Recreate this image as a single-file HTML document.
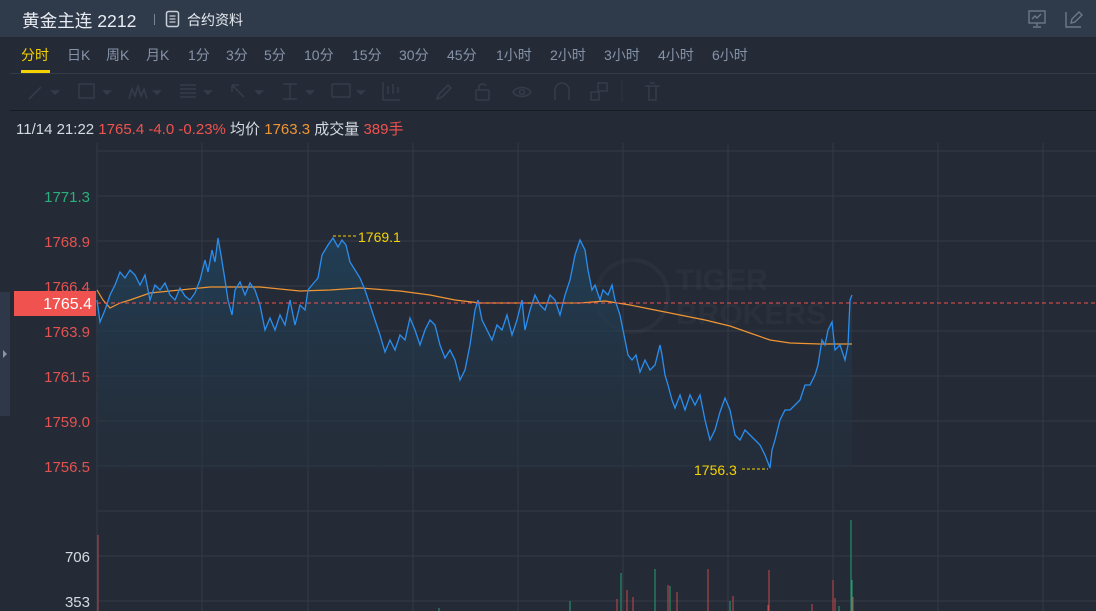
<!DOCTYPE html>
<html><head><meta charset="utf-8"><style>
*{margin:0;padding:0;box-sizing:border-box}
body{width:1096px;height:611px;overflow:hidden;background:#252b36;font-family:"Liberation Sans","Noto Sans CJK SC",sans-serif;position:relative}
.hdr{position:absolute;left:0;top:0;width:1096px;height:37px;background:#2f3a4a}
.t{position:absolute;white-space:nowrap}
.tabs span{position:absolute;top:45px;font-size:14px;color:#8593a8}
</style></head><body>
<div class="hdr"></div>
<div class="t" style="left:22px;top:8px;font-size:17.6px;color:#e8ecf2">黄金主连 2212</div>
<div style="position:absolute;left:154px;top:14px;width:1px;height:11px;background:#7a8494"></div>
<svg style="position:absolute;left:165px;top:10px" width="16" height="18" viewBox="0 0 16 18"><rect x="1.5" y="1.5" width="12" height="15" rx="2" fill="none" stroke="#c8ced8" stroke-width="1.5"/><path d="M4.5 6h6M4.5 9h6M4.5 12h6" stroke="#c8ced8" stroke-width="1.3"/></svg>
<div class="t" style="left:187px;top:10px;font-size:14px;color:#e8ecf2">合约资料</div>
<svg style="position:absolute;left:1027px;top:9px" width="20" height="20" viewBox="0 0 20 20" fill="none" stroke="#6d7888" stroke-width="1.4"><rect x="2" y="2" width="16" height="12"/><path d="M5 10l3-3 2 2 4-4M10 14v3M6 18h8"/></svg>
<svg style="position:absolute;left:1063px;top:9px" width="20" height="20" viewBox="0 0 20 20" fill="none" stroke="#6d7888" stroke-width="1.4"><path d="M3 3v15h15M8 14l1-4 7-7 3 3-7 7z"/></svg>
<div class="tabs">
<span style="left:21px;color:#f5d200">分时</span><span style="left:67px">日K</span><span style="left:106px">周K</span><span style="left:146px">月K</span><span style="left:188px">1分</span><span style="left:226px">3分</span><span style="left:264px">5分</span><span style="left:304px">10分</span><span style="left:352px">15分</span><span style="left:399px">30分</span><span style="left:447px">45分</span><span style="left:496px">1小时</span><span style="left:550px">2小时</span><span style="left:604px">3小时</span><span style="left:658px">4小时</span><span style="left:712px">6小时</span>
</div>
<div style="position:absolute;left:21px;top:70px;width:29px;height:3px;background:#f5d200"></div>
<div style="position:absolute;left:10px;top:73px;width:1086px;height:1px;background:#333c48"></div>
<svg style="position:absolute;left:0;top:74px" width="700" height="36" fill="none" stroke="#343c4a" stroke-width="1.6">
<path d="M29 25l12-12"/><path d="M52 17l3 3 3-3z" fill="#343c4a"/>
<rect x="79" y="10" width="15" height="14"/><path d="M104 17l3 3 3-3z" fill="#343c4a"/>
<path d="M129 25l3-10 3 7 3-10 3 10 3-7 3 10"/><path d="M154 17l3 3 3-3z" fill="#343c4a"/>
<path d="M180 11h16M180 15h16M180 19h16M180 23h16"/><path d="M205 17l3 3 3-3z" fill="#343c4a"/>
<path d="M232 11l12 12M232 11v7M232 11h7"/><path d="M256 17l3 3 3-3z" fill="#343c4a"/>
<path d="M283 10h14M290 10v15M283 25h14"/><path d="M307 17l3 3 3-3z" fill="#343c4a"/>
<rect x="332" y="10" width="18" height="13" rx="1"/><path d="M358 17l3 3 3-3z" fill="#343c4a"/>
<path d="M383 8v18h17M388 12v8M393 10v10M398 13v6"/>
<path d="M437 25l2-5 9-9 3 3-9 9z"/>
<rect x="476" y="16" width="13" height="10" rx="1"/><path d="M479 16v-4a4 4 0 0 1 7 0"/>
<path d="M513 18c4-6 14-6 18 0c-4 6-14 6-18 0z"/><circle cx="522" cy="18" r="2.5"/>
<path d="M555 26v-10a7 7 0 0 1 14 0v10"/>
<rect x="591" y="18" width="8" height="8"/><rect x="598" y="9" width="9" height="8"/>
<path d="M622 6v22" stroke="#2b323d"/>
<path d="M645 12h15M649 12v14h7v-14M650 9h5"/>
</svg>
<div style="position:absolute;left:10px;top:110px;width:1086px;height:1px;background:#181c22"></div>
<div class="t" style="left:16px;top:118px;font-size:15px;color:#d5dae2">11/14 21:22 <span style="color:#f0524f">1765.4 -4.0 -0.23%</span> 均价 <span style="color:#ef9533">1763.3</span> 成交量 <span style="color:#f0524f">389手</span></div>
<div style="position:absolute;left:0;top:292px;width:10px;height:124px;background:#2f3848"></div>
<div style="position:absolute;left:3px;top:350px;width:0;height:0;border-left:4px solid #8a94a4;border-top:4px solid transparent;border-bottom:4px solid transparent"></div>
<svg style="position:absolute;left:0;top:0" width="1096" height="611">
<defs><linearGradient id="g" x1="0" y1="0" x2="0" y2="1"><stop offset="0" stop-color="#1f4560" stop-opacity="0.75"/><stop offset="1" stop-color="#22303f" stop-opacity="0.3"/></linearGradient></defs>
<g stroke="#323b48" stroke-width="1">
<path d="M97 143V611M202 143V611M308 143V611M413 143V611M518 143V611M623 143V611M728 143V611M833 143V611M938 143V611M1043 143V611"/>
<path d="M97 151H1096M97 196H1096M97 241H1096M97 286H1096M97 331H1096M97 376H1096M97 421H1096M97 466H1096M97 511H1096M97 556H1096M97 601H1096"/>
</g>
<g opacity="0.035" fill="#c0c8d4" font-family="Liberation Sans" font-weight="bold" font-size="30"><circle cx="632" cy="296" r="36" fill="none" stroke="#c0c8d4" stroke-width="4"/><text x="676" y="290">TIGER</text><text x="676" y="324">BROKERS</text></g>
<polygon fill="url(#g)" points="97,470 97,300 100,322 105,310 110,295 115,285 120,272 125,278 130,270 135,275 140,285 145,275 150,300 155,285 160,290 165,283 170,295 175,300 180,288 185,296 190,300 195,293 200,280 205,260 208,272 212,250 215,262 218,238 221,255 225,280 228,300 232,315 235,290 240,282 245,295 250,283 255,290 260,305 265,330 270,318 275,330 280,315 285,325 290,300 295,325 300,305 305,310 308,290 312,285 318,278 322,255 328,245 333,238 338,247 342,240 346,245 350,262 355,270 360,278 365,290 370,305 375,320 380,335 385,352 390,340 395,350 400,335 405,340 410,318 415,330 420,345 425,330 430,320 435,325 440,345 445,358 450,350 455,360 460,380 465,370 470,345 475,310 478,300 482,320 487,330 492,340 497,325 502,330 507,315 512,335 517,320 522,300 525,330 530,310 535,295 540,305 545,310 550,295 555,300 560,315 565,295 570,280 575,255 580,240 585,250 588,270 592,290 595,285 600,300 603,290 608,295 612,285 615,300 620,315 625,340 628,355 632,360 636,355 640,372 645,360 650,370 655,365 660,345 662,355 665,375 668,385 672,400 675,408 680,395 685,410 690,395 695,405 700,395 705,420 710,440 715,430 720,412 725,398 730,410 735,435 740,440 745,430 750,435 755,440 760,445 765,455 770,468 772,450 775,440 780,420 785,410 790,410 795,405 800,400 805,385 810,385 815,375 818,365 822,340 825,345 828,330 832,322 835,350 840,345 845,360 848,345 850,300 852,295 852,470"/>
<polyline fill="none" stroke="#ef9533" stroke-width="1.2" points="97,290 103,300 110,308 120,303 130,300 150,293 180,290 210,287 260,287 300,291 330,290 360,288 400,291 430,295 455,300 480,303 530,303 580,303 605,301 630,305 655,310 680,315 705,320 730,326 750,333 770,340 790,343 820,344 852,344"/>
<polyline fill="none" stroke="#2a8ef0" stroke-width="1.3" points="97,300 100,322 105,310 110,295 115,285 120,272 125,278 130,270 135,275 140,285 145,275 150,300 155,285 160,290 165,283 170,295 175,300 180,288 185,296 190,300 195,293 200,280 205,260 208,272 212,250 215,262 218,238 221,255 225,280 228,300 232,315 235,290 240,282 245,295 250,283 255,290 260,305 265,330 270,318 275,330 280,315 285,325 290,300 295,325 300,305 305,310 308,290 312,285 318,278 322,255 328,245 333,238 338,247 342,240 346,245 350,262 355,270 360,278 365,290 370,305 375,320 380,335 385,352 390,340 395,350 400,335 405,340 410,318 415,330 420,345 425,330 430,320 435,325 440,345 445,358 450,350 455,360 460,380 465,370 470,345 475,310 478,300 482,320 487,330 492,340 497,325 502,330 507,315 512,335 517,320 522,300 525,330 530,310 535,295 540,305 545,310 550,295 555,300 560,315 565,295 570,280 575,255 580,240 585,250 588,270 592,290 595,285 600,300 603,290 608,295 612,285 615,300 620,315 625,340 628,355 632,360 636,355 640,372 645,360 650,370 655,365 660,345 662,355 665,375 668,385 672,400 675,408 680,395 685,410 690,395 695,405 700,395 705,420 710,440 715,430 720,412 725,398 730,410 735,435 740,440 745,430 750,435 755,440 760,445 765,455 770,468 772,450 775,440 780,420 785,410 790,410 795,405 800,400 805,385 810,385 815,375 818,365 822,340 825,345 828,330 832,322 835,350 840,345 845,360 848,345 850,300 852,295"/>
<path d="M97 303H1096" stroke="#f0524f" stroke-width="1" stroke-dasharray="4 3"/>
<path d="M333 236H356M742 469H768" stroke="#f5d200" stroke-width="1" stroke-dasharray="3 2"/>
<text x="358" y="242" font-size="14" fill="#f5d200" font-family="Liberation Sans">1769.1</text>
<text x="694" y="475" font-size="14" fill="#f5d200" font-family="Liberation Sans">1756.3</text>
<g font-family="Liberation Sans" font-size="15" text-anchor="end">
<text x="90" y="202" fill="#2ab07a">1771.3</text>
<text x="90" y="247" fill="#e35250">1768.9</text>
<text x="90" y="292" fill="#e35250">1766.4</text>
<text x="90" y="337" fill="#e35250">1763.9</text>
<text x="90" y="382" fill="#e35250">1761.5</text>
<text x="90" y="427" fill="#e35250">1759.0</text>
<text x="90" y="472" fill="#e35250">1756.5</text>
<text x="90" y="562" fill="#d5dae2">706</text>
<text x="90" y="607" fill="#d5dae2">353</text>
</g>
<rect x="14" y="291" width="82" height="25" fill="#f0524f"/>
<text x="92" y="309" font-family="Liberation Sans" font-size="16" fill="#fff" text-anchor="end">1765.4</text>
<g stroke-width="1">
<path d="M98 535V611" stroke="#b24a4a"/>
<path d="M439 608V611M570 601V611M621 573V611M655 569V611M670 586V611M730 601V611M851 520V611M852 580V611M839 606V611" stroke="#1fa070"/>
<path d="M617 599V611M627 590V611M633 597V611M668 585V611M677 592V611M708 569V611M733 596V611M769 570V611M812 604V611M833 580V611M835 598V611M853 597V611M768 605V611" stroke="#c24a4a"/>
</g>
</svg>
</body></html>
